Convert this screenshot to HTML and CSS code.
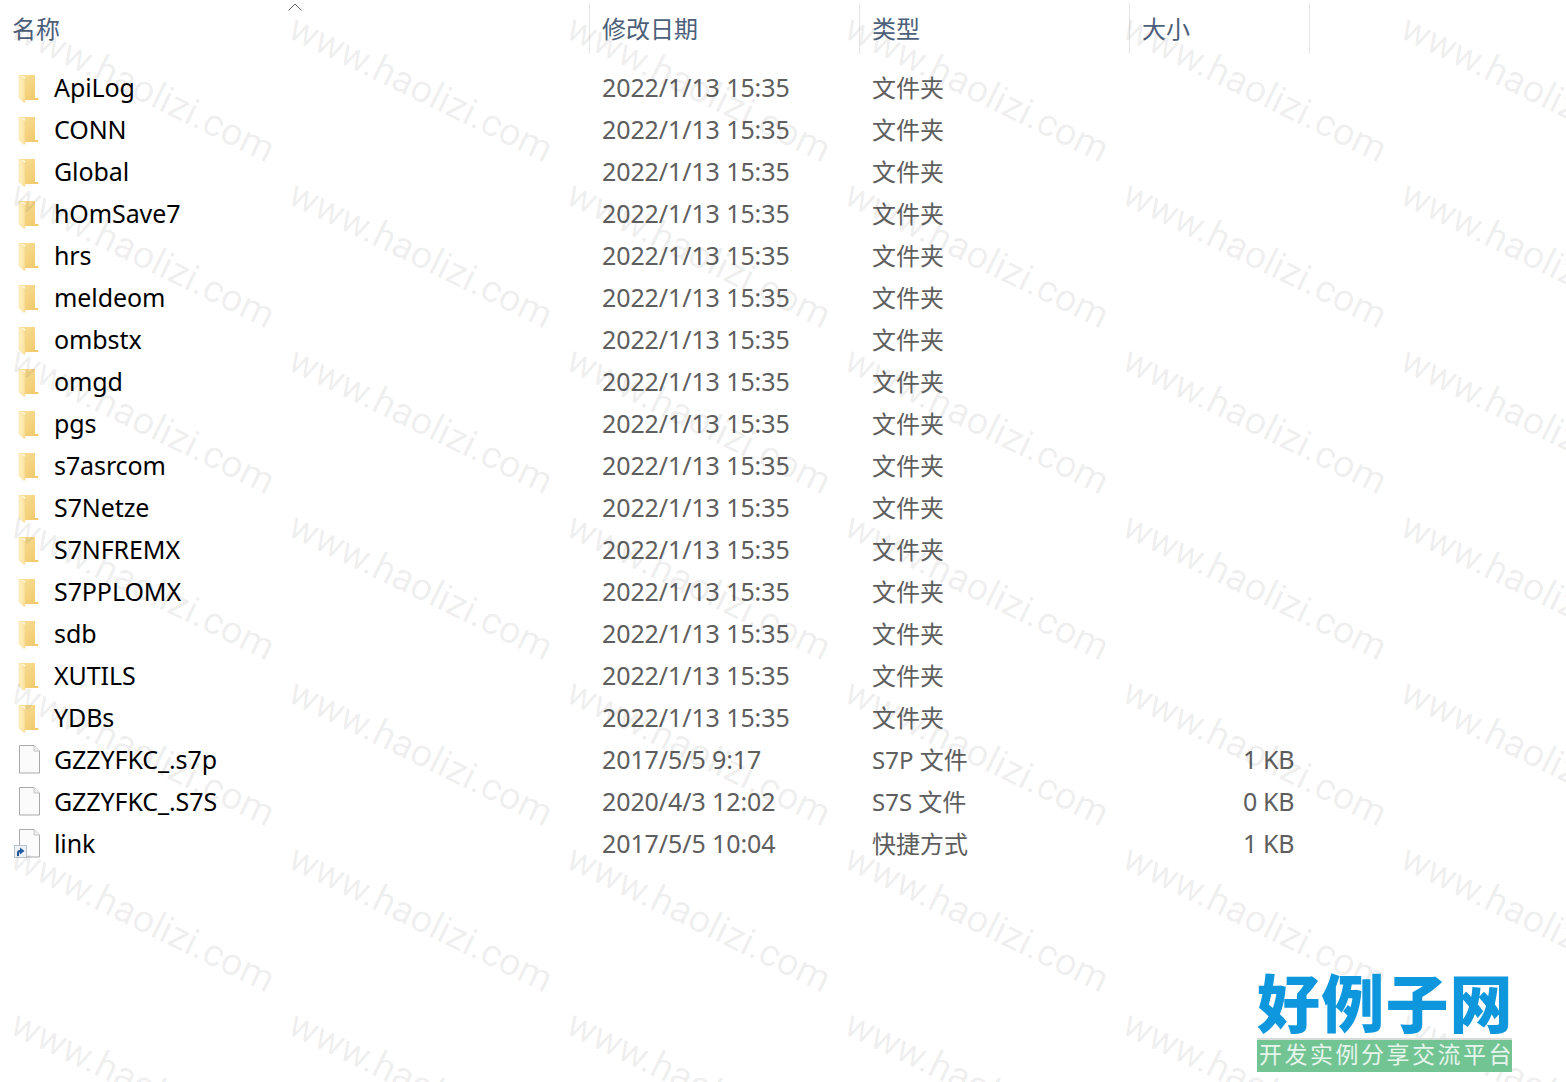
FILE: index.html
```html
<!DOCTYPE html>
<html lang="zh-CN">
<head>
<meta charset="utf-8">
<title>文件列表</title>
<link rel="stylesheet" href="styles.css">
</head>
<body>
<svg class="defs" width="0" height="0" aria-hidden="true">
  <defs>
    <linearGradient id="fb" x1="0" y1="0" x2="1" y2="1"><stop offset="0" stop-color="#f9e09a"/><stop offset="1" stop-color="#f0c768"/></linearGradient>
    <linearGradient id="ff" x1="0" y1="0" x2="1" y2="0"><stop offset="0" stop-color="#fff2c4"/><stop offset="1" stop-color="#fbe09a"/></linearGradient>
    <symbol id="folder" viewBox="0 0 24 30">
      <path d="M3 2H19V25H22.500L22 27H9V4Z" fill="url(#fb)"/>
      <path d="M3 2L9 6V29L8 29.500L3 25Z" fill="url(#ff)" stroke="#f3d68c" stroke-width=".5"/>
    </symbol>
    <symbol id="file" viewBox="0 0 24 30">
      <path d="M3.500 .5H18L23.500 6V28H3.500Z" fill="#fbfbfb" stroke="#a9a9a9"/>
      <path d="M18 .5V6H23.500" fill="#efefef" stroke="#c4c4c4"/>
    </symbol>
  </defs>
</svg>
<main class="list">
  <header class="head">
    <div class="hcell hname">名称<svg class="caret" viewBox="0 0 14 8"><path d="M.5 7.500L7 1L13.500 7.500" fill="none" stroke="#666" stroke-width="1"/></svg></div>
    <div class="hcell">修改日期</div>
    <div class="hcell">类型</div>
    <div class="hcell">大小</div>
  </header>
  <div class="rows">
    <div class="row"><div class="name"><svg class="ico"><use href="#folder"/></svg>ApiLog</div><div class="meta">2022/1/13 15:35</div><div class="meta kind">文件夹</div><div class="meta size"></div></div>
    <div class="row"><div class="name"><svg class="ico"><use href="#folder"/></svg>CONN</div><div class="meta">2022/1/13 15:35</div><div class="meta kind">文件夹</div><div class="meta size"></div></div>
    <div class="row"><div class="name"><svg class="ico"><use href="#folder"/></svg>Global</div><div class="meta">2022/1/13 15:35</div><div class="meta kind">文件夹</div><div class="meta size"></div></div>
    <div class="row"><div class="name"><svg class="ico"><use href="#folder"/></svg>hOmSave7</div><div class="meta">2022/1/13 15:35</div><div class="meta kind">文件夹</div><div class="meta size"></div></div>
    <div class="row"><div class="name"><svg class="ico"><use href="#folder"/></svg>hrs</div><div class="meta">2022/1/13 15:35</div><div class="meta kind">文件夹</div><div class="meta size"></div></div>
    <div class="row"><div class="name"><svg class="ico"><use href="#folder"/></svg>meldeom</div><div class="meta">2022/1/13 15:35</div><div class="meta kind">文件夹</div><div class="meta size"></div></div>
    <div class="row"><div class="name"><svg class="ico"><use href="#folder"/></svg>ombstx</div><div class="meta">2022/1/13 15:35</div><div class="meta kind">文件夹</div><div class="meta size"></div></div>
    <div class="row"><div class="name"><svg class="ico"><use href="#folder"/></svg>omgd</div><div class="meta">2022/1/13 15:35</div><div class="meta kind">文件夹</div><div class="meta size"></div></div>
    <div class="row"><div class="name"><svg class="ico"><use href="#folder"/></svg>pgs</div><div class="meta">2022/1/13 15:35</div><div class="meta kind">文件夹</div><div class="meta size"></div></div>
    <div class="row"><div class="name"><svg class="ico"><use href="#folder"/></svg>s7asrcom</div><div class="meta">2022/1/13 15:35</div><div class="meta kind">文件夹</div><div class="meta size"></div></div>
    <div class="row"><div class="name"><svg class="ico"><use href="#folder"/></svg>S7Netze</div><div class="meta">2022/1/13 15:35</div><div class="meta kind">文件夹</div><div class="meta size"></div></div>
    <div class="row"><div class="name"><svg class="ico"><use href="#folder"/></svg>S7NFREMX</div><div class="meta">2022/1/13 15:35</div><div class="meta kind">文件夹</div><div class="meta size"></div></div>
    <div class="row"><div class="name"><svg class="ico"><use href="#folder"/></svg>S7PPLOMX</div><div class="meta">2022/1/13 15:35</div><div class="meta kind">文件夹</div><div class="meta size"></div></div>
    <div class="row"><div class="name"><svg class="ico"><use href="#folder"/></svg>sdb</div><div class="meta">2022/1/13 15:35</div><div class="meta kind">文件夹</div><div class="meta size"></div></div>
    <div class="row"><div class="name"><svg class="ico"><use href="#folder"/></svg>XUTILS</div><div class="meta">2022/1/13 15:35</div><div class="meta kind">文件夹</div><div class="meta size"></div></div>
    <div class="row"><div class="name"><svg class="ico"><use href="#folder"/></svg>YDBs</div><div class="meta">2022/1/13 15:35</div><div class="meta kind">文件夹</div><div class="meta size"></div></div>
    <div class="row"><div class="name"><svg class="ico"><use href="#file"/></svg>GZZYFKC_.s7p</div><div class="meta">2017/5/5 9:17</div><div class="meta kind">S7P 文件</div><div class="meta size">1 KB</div></div>
    <div class="row"><div class="name"><svg class="ico"><use href="#file"/></svg>GZZYFKC_.S7S</div><div class="meta">2020/4/3 12:02</div><div class="meta kind">S7S 文件</div><div class="meta size">0 KB</div></div>
    <div class="row"><div class="name"><span class="icowrap"><svg class="ico"><use href="#file"/></svg><svg class="shortcut" viewBox="0 0 13 13"><rect x=".5" y=".5" width="12" height="12" fill="#eef2f7" stroke="#b9c2cd"/><path d="M3 11V8Q3 5 6 5V2.500L10.500 6L6 9.500V7Q5 7 5 9V11Z" fill="#1f5a9e"/></svg></span>link</div><div class="meta">2017/5/5 10:04</div><div class="meta kind">快捷方式</div><div class="meta size">1 KB</div></div>
  </div>
</main>
<div class="wm" aria-hidden="true">
  <span>www.haolizi.com</span><span>www.haolizi.com</span><span>www.haolizi.com</span><span>www.haolizi.com</span><span>www.haolizi.com</span><span>www.haolizi.com</span>
  <span>www.haolizi.com</span><span>www.haolizi.com</span><span>www.haolizi.com</span><span>www.haolizi.com</span><span>www.haolizi.com</span><span>www.haolizi.com</span>
  <span>www.haolizi.com</span><span>www.haolizi.com</span><span>www.haolizi.com</span><span>www.haolizi.com</span><span>www.haolizi.com</span><span>www.haolizi.com</span>
  <span>www.haolizi.com</span><span>www.haolizi.com</span><span>www.haolizi.com</span><span>www.haolizi.com</span><span>www.haolizi.com</span><span>www.haolizi.com</span>
  <span>www.haolizi.com</span><span>www.haolizi.com</span><span>www.haolizi.com</span><span>www.haolizi.com</span><span>www.haolizi.com</span><span>www.haolizi.com</span>
  <span>www.haolizi.com</span><span>www.haolizi.com</span><span>www.haolizi.com</span><span>www.haolizi.com</span><span>www.haolizi.com</span><span>www.haolizi.com</span>
  <span>www.haolizi.com</span><span>www.haolizi.com</span><span>www.haolizi.com</span><span>www.haolizi.com</span><span>www.haolizi.com</span><span>www.haolizi.com</span>
</div>
<aside class="logo">
  <div class="logo-title">好例子网</div>
  <div class="logo-sub">开发实例分享交流平台</div>
</aside>
</body>
</html>
```

FILE: styles.css
```css
html, body {
  margin: 0;
  height: 100%;
  overflow: hidden;
  background: #fff;
}
body {
  position: relative;
  font-family: "Noto Sans", "Noto Sans CJK SC", sans-serif;
  font-size: 25px;
}
.defs { position: absolute; }
.list { display: flex; flex-direction: column; }
.head {
  display: grid;
  grid-template-columns: 590px 270px 270px 180px;
  width: 1310px;
  height: 51px;
  margin-top: 3px;
  font-size: 24px;
}
.hcell {
  display: flex;
  align-items: center;
  padding: 1px 0 0 12px;
  color: #4c607a;
  border-right: 1px solid #e5e5e5;
  box-sizing: border-box;
  line-height: 1;
}
.hname { position: relative; }
.caret {
  position: absolute;
  left: 288px;
  top: 0;
  width: 14px;
  height: 8px;
}
.rows { margin-top: 13px; }
.row {
  display: grid;
  grid-template-columns: 590px 270px 270px 164px;
  height: 42px;
  align-items: start;
  line-height: 40px;
  white-space: nowrap;
}
.name {
  display: flex;
  align-items: flex-start;
  height: 42px;
  color: #000;
  letter-spacing: -.1px;
  padding-left: 16px;
}
.ico {
  width: 24px;
  height: 30px;
  margin-right: 14px;
  flex: none;
  align-self: center;
}
.icowrap { position: relative; display: flex; align-self: center; }
.shortcut {
  position: absolute;
  left: -2px;
  bottom: 1px;
  width: 13px;
  height: 13px;
}
.meta {
  color: #5e5e5e;
  padding-left: 12px;
  letter-spacing: -.1px;
}
.kind { font-size: 24px; letter-spacing: 0; line-height: 42px; }
.size { text-align: right; padding-left: 0; letter-spacing: -.4px; }
.wm {
  position: absolute;
  left: 14px;
  top: 18px;
  display: grid;
  grid-template-columns: repeat(6, 278px);
  grid-auto-rows: 166px;
  pointer-events: none;
}
.wm span {
  display: block;
  font-family: Roboto, sans-serif;
  font-size: 38px;
  line-height: 38px;
  white-space: nowrap;
  color: rgba(0, 0, 0, .07);
  transform-origin: 0 0;
  transform: translate(8px, -10px) rotate(26deg);
  width: 278px;
}
.logo {
  position: absolute;
  left: 1257px;
  top: 966px;
  width: 255px;
}
.logo-title {
  font-family: "Noto Sans CJK SC", sans-serif;
  font-weight: 900;
  font-size: 63px;
  line-height: 68px;
  padding-bottom: 4px;
  letter-spacing: 1.200px;
  color: #0f97de;
  white-space: nowrap;
}
.logo-sub {
  height: 32px;
  background: #72c493;
  border-top: 2px solid #d8dcd9;
  color: #e6f5ec;
  font-family: "Noto Sans CJK SC", sans-serif;
  font-size: 23px;
  line-height: 26px;
  letter-spacing: 2.500px;
  white-space: nowrap;
  overflow: hidden;
  padding-left: 2px;
}
```
